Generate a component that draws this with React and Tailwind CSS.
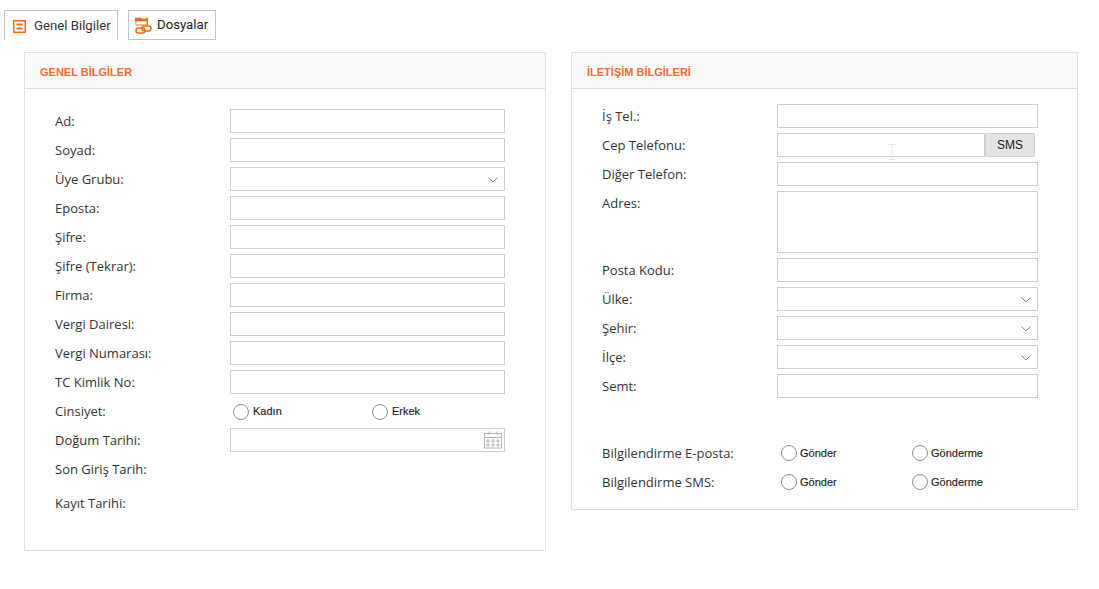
import React from "react";

const Label = ({ children }) => (
  <div className="w-[175px] shrink-0 text-[13px] leading-[24px] text-[#333]">{children}</div>
);

const Chevron = () => (
  <svg width="10" height="6" viewBox="0 0 10 6" className="absolute right-[6px] top-[9px]" fill="none" stroke="#8a8a8a" strokeWidth="1">
    <path d="M0.5 0.5L5 5L9.5 0.5" />
  </svg>
);

const Box = ({ width, select, children, h = "h-[24px]" }) => (
  <div className={`relative ${h} ${width} border border-[#cfcfcf] bg-white shrink-0`}>
    {select && <Chevron />}
    {children}
  </div>
);

const Row = ({ label, width, select }) => (
  <div className="flex h-[24px] mb-[5px]">
    <Label>{label}</Label>
    <Box width={width} select={select} />
  </div>
);

const Radio = ({ label, w, gap = "ml-[4px]", textPad = "pt-[1px]" }) => (
  <div className={`flex items-center ${w} shrink-0`}>
    <span className="box-border block h-[16px] w-[16px] rounded-full border border-[#8f8f8f] bg-white" />
    <span className={`${gap} ${textPad} text-[11px] text-[#222] font-['Liberation_Sans',sans-serif] [-webkit-text-stroke:0.15px_#222]`}>{label}</span>
  </div>
);

const Calendar = () => (
  <svg width="19" height="18" viewBox="0 0 19 18" className="absolute right-[2px] top-[2px]" fill="none" stroke="#b5b5b5" strokeWidth="1">
    <rect x="1.500" y="2.500" width="17" height="14.500" />
    <path d="M1.500 6.500H18.500M6 0.500V4M14 0.500V4" />
    <path d="M4 9h2v2H4zM9 9h2v2H9zM14 9h2v2h-2zM4 13h2v2H4zM9 13h2v2H9zM14 13h2v2h-2z" />
  </svg>
);

const Panel = ({ title, className, children }) => (
  <div className={`border border-[#e0e0e0] bg-white ${className}`}>
    <div className="h-[36px] border-b border-[#e0e0e0] bg-[#fafafa] pl-[15px] pt-[11px] text-[11px] leading-[16px] font-bold text-[#f26b38] font-['Liberation_Sans',sans-serif]">
      {title}
    </div>
    {children}
  </div>
);

export default function App() {
  return (
    <div className="h-[589px] w-[1099px] overflow-hidden bg-white font-['Open_Sans',sans-serif]">
      <div className="flex items-start pl-[4px] pt-[10px] font-['Roboto',sans-serif] text-[13.2px] text-[#333]">
        <div className="flex h-[30px] w-[114px] items-center border border-b-0 border-[#c4c4c4] pl-[8px]">
          <svg width="13" height="13" viewBox="0 0 13 13" fill="none" stroke="#f26a12" className="mt-[2px]">
            <rect x="0.750" y="0.750" width="11.500" height="11.500" strokeWidth="1.500" />
            <path d="M3.500 4.500H9.500M3.500 8.500H9.500" strokeWidth="2" />
          </svg>
          <span className="ml-[8px]">Genel Bilgiler</span>
        </div>
        <div className="ml-[10px] flex h-[30px] w-[88px] items-center border border-[#c4c4c4] pl-[6px]">
          <svg width="17" height="17" viewBox="0 0 17 17" fill="none" stroke="#f26a12" className="mt-[1px]">
            <path d="M0 2.500H13" strokeWidth="3.500" />
            <path d="M7 1.500H8.500M9.500 1.500H11" stroke="#fff" strokeWidth="1" />
            <path d="M0.500 8H12.300V4" strokeWidth="1.200" />
            <path d="M0.800 6.500V4.500" strokeWidth="1.200" />
            <rect x="1" y="11" width="9" height="5" rx="2.500" strokeWidth="1.500" />
            <rect x="7" y="9" width="9" height="5" rx="2.500" strokeWidth="1.500" />
          </svg>
          <span className="ml-[5px] text-[#222]">Dosyalar</span>
        </div>
      </div>

      <div className="flex items-start pl-[24px] pt-[12px]">
        <Panel title="GENEL BİLGİLER" className="h-[499px] w-[522px]">
          <div className="pl-[30px] pt-[20px]">
            <Row label="Ad:" width="w-[275px]" />
            <Row label="Soyad:" width="w-[275px]" />
            <Row label="Üye Grubu:" width="w-[275px]" select />
            <Row label="Eposta:" width="w-[275px]" />
            <Row label="Şifre:" width="w-[275px]" />
            <Row label="Şifre (Tekrar):" width="w-[275px]" />
            <Row label="Firma:" width="w-[275px]" />
            <Row label="Vergi Dairesi:" width="w-[275px]" />
            <Row label="Vergi Numarası:" width="w-[275px]" />
            <Row label="TC Kimlik No:" width="w-[275px]" />
            <div className="flex h-[24px] mb-[5px]">
              <Label>Cinsiyet:</Label>
              <div className="flex items-center pl-[3px] pt-[1px]">
                <Radio label="Kadın" w="w-[139px]" textPad="pt-0" />
                <Radio label="Erkek" w="w-[80px]" textPad="pt-0" />
              </div>
            </div>
            <div className="flex h-[24px] mb-[5px]">
              <Label>Doğum Tarihi:</Label>
              <Box width="w-[275px]">
                <Calendar />
              </Box>
            </div>
            <div className="flex h-[24px] mb-[10px]">
              <Label>Son Giriş Tarih:</Label>
            </div>
            <div className="flex h-[24px]">
              <Label>Kayıt Tarihi:</Label>
            </div>
          </div>
        </Panel>

        <Panel title="İLETİŞİM BİLGİLERİ" className="ml-[25px] h-[458px] w-[507px]">
          <div className="pl-[30px] pt-[15px]">
            <Row label="İş Tel.:" width="w-[261px]" />
            <div className="flex h-[24px] mb-[5px]">
              <Label>Cep Telefonu:</Label>
              <div className="relative flex">
                <Box width="w-[208px]" />
                <button className="h-[24px] w-[50px] rounded-[2px] border border-[#cfcfcf] bg-[#e4e4e4] text-[12px] text-[#222] font-['Liberation_Sans',sans-serif]">
                  SMS
                </button>
                <svg width="8" height="16" viewBox="0 0 8 16" className="absolute left-[111px] top-[11px]" fill="none" stroke="#e8e8e8">
                  <path d="M0.500 0.500H7.500M4 0.500V15.500M0.500 15.500H7.500" />
                </svg>
              </div>
            </div>
            <Row label="Diğer Telefon:" width="w-[261px]" />
            <div className="flex h-[62px] mb-[5px]">
              <Label>Adres:</Label>
              <Box width="w-[261px]" h="h-[62px]" />
            </div>
            <Row label="Posta Kodu:" width="w-[261px]" />
            <Row label="Ülke:" width="w-[261px]" select />
            <Row label="Şehir:" width="w-[261px]" select />
            <Row label="İlçe:" width="w-[261px]" select />
            <Row label="Semt:" width="w-[261px]" />
            <div className="flex h-[24px] mb-[5px] mt-[43px]">
              <Label>Bilgilendirme E-posta:</Label>
              <div className="flex items-center pl-[4px]">
                <Radio label="Gönder" w="w-[131px]" gap="ml-[3px]" />
                <Radio label="Gönderme" w="w-[90px]" gap="ml-[3px]" />
              </div>
            </div>
            <div className="flex h-[24px]">
              <Label>Bilgilendirme SMS:</Label>
              <div className="flex items-center pl-[4px]">
                <Radio label="Gönder" w="w-[131px]" gap="ml-[3px]" />
                <Radio label="Gönderme" w="w-[90px]" gap="ml-[3px]" />
              </div>
            </div>
          </div>
        </Panel>
      </div>
    </div>
  );
}
